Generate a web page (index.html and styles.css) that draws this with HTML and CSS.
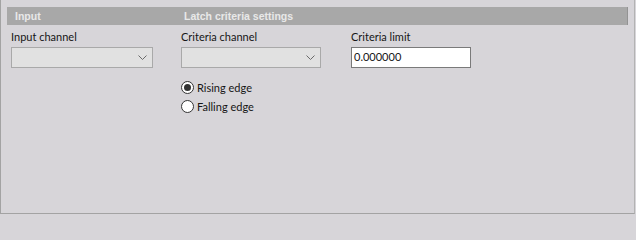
FILE: index.html
```html
<!DOCTYPE html>
<html>
<head>
<meta charset="utf-8">
<link rel="stylesheet" href="styles.css">
</head>
<body>
<div class="frame">
  <div class="header">
    <span class="h-input">Input</span>
    <span class="h-latch">Latch criteria settings</span>
  </div>
  <div class="row">
    <div class="col">
      <div class="label">Input channel</div>
      <div class="select"><svg class="chev" width="9" height="5" viewBox="0 0 9 5"><path d="M0.5 0.5 L4.5 4.5 L8.5 0.5" fill="none" stroke="#6a6a6a" stroke-width="1"/></svg></div>
    </div>
    <div class="col">
      <div class="label">Criteria channel</div>
      <div class="select narrow"><svg class="chev" width="9" height="5" viewBox="0 0 9 5"><path d="M0.5 0.5 L4.5 4.5 L8.5 0.5" fill="none" stroke="#6a6a6a" stroke-width="1"/></svg></div>
      <div class="radios">
        <div class="radio"><span class="circle checked"></span><span>Rising edge</span></div>
        <div class="radio"><span class="circle"></span><span>Falling edge</span></div>
      </div>
    </div>
    <div class="col">
      <div class="label">Criteria limit</div>
      <div class="textbox">0.000000</div>
    </div>
  </div>
</div>
</body>
</html>
```
FILE: styles.css
```css
html, body {
  margin: 0;
  padding: 0;
  background: #d7d5d9;
}
.frame {
  box-sizing: border-box;
  width: 635px;
  height: 214px;
  border-left: 1px solid #a3a3a3;
  border-right: 1px solid #b3b3b3;
  border-bottom: 1px solid #a3a3a3;
  background: #d7d5d9;
  padding: 7px 6px 0 6px;
  font-family: "Lato", sans-serif;
  font-size: 11px;
  color: #161616;
}
.header {
  height: 18px;
  background: #a8a8a8;
  border-right: 1px solid #939393;
  display: flex;
  align-items: center;
  font-family: "Liberation Sans", sans-serif;
  font-weight: bold;
  font-size: 10.5px;
  color: #e8e8e8;
}
.h-input {
  margin-left: 8px;
  width: 169px;
}
.row {
  display: flex;
  padding-left: 4px;
  margin-top: 4px;
}
.col {
  width: 170px;
  display: flex;
  flex-direction: column;
}
.label {
  height: 16px;
  line-height: 16px;
}
.select {
  box-sizing: border-box;
  margin-top: 2px;
  width: 142px;
  height: 21px;
  background: #e1e1e1;
  border: 1px solid #a9a9a9;
  position: relative;
}
.select.narrow {
  width: 140px;
}
.chev {
  position: absolute;
  right: 5px;
  top: 7px;
}
.textbox {
  box-sizing: border-box;
  margin-top: 2px;
  width: 120px;
  height: 21px;
  background: #ffffff;
  border: 1px solid #7a7a7a;
  padding-left: 2px;
  line-height: 18px;
}
.radios {
  margin-top: 12px;
  display: flex;
  flex-direction: column;
  gap: 5px;
}
.radio {
  display: flex;
  align-items: center;
  gap: 3px;
  height: 14px;
}
.circle {
  box-sizing: border-box;
  width: 13px;
  height: 13px;
  border-radius: 50%;
  border: 1px solid #333;
  background: #fff;
  display: flex;
  align-items: center;
  justify-content: center;
}
.circle.checked::after {
  content: "";
  width: 7px;
  height: 7px;
  border-radius: 50%;
  background: #333;
}
```
